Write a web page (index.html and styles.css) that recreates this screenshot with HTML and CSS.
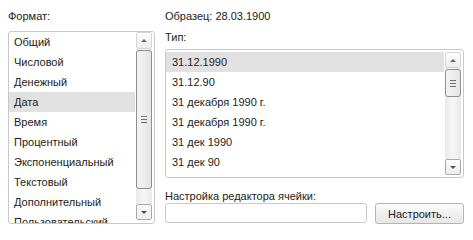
FILE: index.html
```html
<!DOCTYPE html>
<html lang="ru">
<head>
    <meta charset="UTF-8">
    <title>Формат ячеек</title>
    <link rel="stylesheet" href="styles.css">
</head>
<body>

<div class="dialog">
    <div class="col-left">
        <div class="label">Формат:</div>
        <div class="listbox format-list">
            <div class="items">
                <div class="item">Общий</div>
                <div class="item">Числовой</div>
                <div class="item">Денежный</div>
                <div class="item selected">Дата</div>
                <div class="item">Время</div>
                <div class="item">Процентный</div>
                <div class="item">Экспоненциальный</div>
                <div class="item">Текстовый</div>
                <div class="item">Дополнительный</div>
                <div class="item">Пользовательский</div>
            </div>
            <div class="scrollbar">
                <div class="sb-btn"><span class="arrow up"></span></div>
                <div class="sb-track">
                    <div class="sb-thumb thumb-long"><span class="grip"></span></div>
                </div>
                <div class="sb-btn"><span class="arrow down"></span></div>
            </div>
        </div>
    </div>

    <div class="col-right">
        <div class="label">Образец: 28.03.1900</div>
        <div class="label type-label">Тип:</div>
        <div class="listbox type-list">
            <div class="items">
                <div class="item selected">31.12.1990</div>
                <div class="item">31.12.90</div>
                <div class="item">31 декабря 1990 г.</div>
                <div class="item">31 декабря 1990 г.</div>
                <div class="item">31 дек 1990</div>
                <div class="item">31 дек 90</div>
            </div>
            <div class="scrollbar">
                <div class="sb-btn"><span class="arrow up"></span></div>
                <div class="sb-track">
                    <div class="sb-thumb thumb-short"><span class="grip"></span></div>
                </div>
                <div class="sb-btn"><span class="arrow down"></span></div>
            </div>
        </div>

        <div class="label editor-label">Настройка редактора ячейки:</div>
        <div class="editor-row">
            <input type="text" class="editor-input">
            <button class="setup-btn">Настроить...</button>
        </div>
    </div>
</div>

</body>
</html>
```

FILE: styles.css
```css
body {
    margin: 0;
    background-color: #ffffff;
    font-family: 'Liberation Sans', Arial, sans-serif;
    font-size: 11px;
    color: #222222;
}
.dialog {
    display: flex;
    gap: 10px;
    padding: 9px 8px 0 8px;
}
.col-left {
    width: 147px;
}
.col-right {
    width: 299px;
}
.label {
    line-height: 14px;
    height: 14px;
}
.type-label {
    margin-top: 7px;
}
.listbox {
    display: flex;
    border: 1px solid #c9c9c9;
    border-radius: 3px;
    background-color: #ffffff;
    overflow: hidden;
    box-sizing: border-box;
}
.format-list {
    margin-top: 8px;
    height: 193px;
}
.type-list {
    margin-top: 5px;
    height: 129px;
    padding-top: 2px;
}
.items {
    flex: 1;
    overflow: hidden;
}
.item {
    height: 20px;
    line-height: 20px;
    padding-left: 5px;
    white-space: nowrap;
}
.type-list .item {
    padding-left: 6px;
}
.item.selected {
    background-color: #e1e1e1;
}

/* scrollbar */
.scrollbar {
    width: 16px;
    display: flex;
    flex-direction: column;
    margin: 0 2px 3px 1px;
}
.type-list .scrollbar {
    margin: 0 2px 2px 1px;
}
.sb-btn {
    height: 16px;
    box-sizing: border-box;
    border: 1px solid #a9a9a9;
    border-radius: 2px;
    background: linear-gradient(#fdfdfd, #ececec);
    display: flex;
    align-items: center;
    justify-content: center;
}
.format-list .sb-btn:first-child {
    height: 17px;
    border-color: #d4d4d4;
}
.type-list .sb-btn:first-child {
    border-color: #d4d4d4;
}
.arrow {
    width: 0;
    height: 0;
    border-left: 3px solid transparent;
    border-right: 3px solid transparent;
}
.arrow.up {
    border-bottom: 3px solid #6a6a6a;
}
.arrow.down {
    border-top: 3px solid #505050;
}
.sb-track {
    flex: 1;
    background: linear-gradient(to right, #e9e9e9, #f6f6f6 50%, #e9e9e9);
    padding-top: 1px;
}
.sb-thumb {
    box-sizing: border-box;
    border: 1px solid #8f8f8f;
    border-radius: 3px;
    background: linear-gradient(to right, #f4f4f4, #e4e4e4);
    display: flex;
    align-items: center;
    justify-content: center;
}
.thumb-long {
    height: 139px;
}
.thumb-short {
    height: 28px;
}
.grip {
    width: 6px;
    height: 7px;
    background: linear-gradient(#707070 0 1px, transparent 1px 3px, #707070 3px 4px, transparent 4px 6px, #707070 6px 7px);
}

/* editor row */
.editor-label {
    margin-top: 11px;
}
.editor-row {
    display: flex;
    gap: 8px;
}
.editor-input {
    width: 202px;
    height: 20px;
    box-sizing: border-box;
    border: 1px solid #c9c9c9;
    border-radius: 3px;
    margin: 0;
    padding: 0 4px;
    font-family: inherit;
    font-size: 11px;
}
.setup-btn {
    width: 89px;
    height: 21px;
    box-sizing: border-box;
    border: 1px solid #b4b4b4;
    border-radius: 3px;
    background: linear-gradient(#fbfbfb, #e6e6e6);
    font-family: inherit;
    font-size: 11px;
    color: #222222;
    padding: 0;
    margin: 0;
}
```
